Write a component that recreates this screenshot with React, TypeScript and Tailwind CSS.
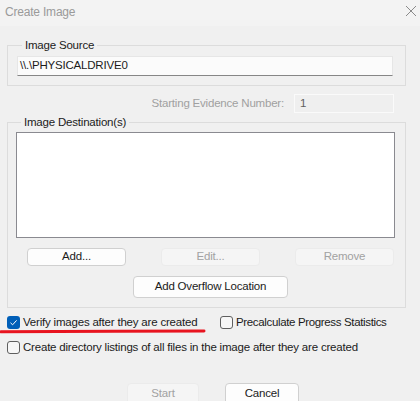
import React from "react";

const font = { fontFamily: '"Liberation Sans", Arial, sans-serif' };

function Btn({ children, disabled, className = "" }: { children: React.ReactNode; disabled?: boolean; className?: string }) {
  return (
    <div
      className={
        "flex items-center justify-center rounded-[4px] border text-[11.5px] tracking-[-0.2px] " +
        (disabled
          ? "border-[#ebebeb] bg-[#f5f5f5] text-[#a2a2a2] "
          : "border-[#d0d0d0] bg-[#fdfdfd] text-[#1b1b1b] ") +
        className
      }
    >
      {children}
    </div>
  );
}

function Check({ checked }: { checked?: boolean }) {
  return checked ? (
    <div className="flex h-[13px] w-[13px] shrink-0 items-center justify-center rounded-[3px] bg-[#005fb8]">
      <svg width="9" height="9" viewBox="0 0 9 9">
        <path d="M1.5 4.8 L3.6 6.8 L7.6 2.4" fill="none" stroke="#ffffff" strokeWidth="1" />
      </svg>
    </div>
  ) : (
    <div className="h-[13px] w-[13px] shrink-0 rounded-[3px] border border-[#5f5f5f] bg-[#f7f7f7]" />
  );
}

export default function App() {
  return (
    <div className="relative h-[401px] w-[420px] overflow-hidden bg-[#f0f0f0] text-[11.5px] tracking-[-0.2px] text-[#1b1b1b]" style={font}>
      {/* title bar */}
      <div className="flex h-[26px] items-start justify-between bg-[#f3f3f3] pl-[5px] pr-[3px] pt-[3px]">
        <span className="text-[12px] text-[#9a9a9a]">Create Image</span>
        <svg width="12" height="12" viewBox="0 0 12 12" className="mt-[2px]">
          <path d="M1 1 L11 11 M11 1 L1 11" stroke="#8a8a8a" strokeWidth="1" />
        </svg>
      </div>

      <div className="flex flex-col pl-[7px] pr-[14px] pt-[12px]">
        {/* Image Source */}
        <fieldset className="border border-[#dcdcdc] pb-[9px] pl-[9px] pr-[12px] pt-[4px]">
          <legend className="ml-[5px] px-[3px] leading-[14px]">Image Source</legend>
          <div className="flex h-[20px] items-center border border-[#e6e6e6] border-b-[#868686] bg-[#fbfbfb] pl-[2px]">
            \\.\PHYSICALDRIVE0
          </div>
        </fieldset>

        {/* Starting Evidence Number */}
        <div className="mt-[8px] flex items-center justify-end gap-[10px] pr-[12px]">
          <span className="text-[#a0a0a0]">Starting Evidence Number:</span>
          <div className="flex h-[19px] w-[100px] items-center border border-[#fafafa] bg-[#efefef] pl-[5px] text-[#5f5f5f]">1</div>
        </div>

        {/* Image Destination(s) */}
        <fieldset className="mt-[2px] border border-[#dcdcdc] pb-[9px] pl-[8px] pr-[10px] pt-[3px]">
          <legend className="ml-[5px] px-[3px] leading-[14px]">Image Destination(s)</legend>
          <div className="h-[106px] border border-[#8a8a90] bg-white" />
          <div className="mt-[10px] flex gap-[35px] pl-[11px]">
            <Btn className="h-[18px] w-[99px]">Add...</Btn>
            <Btn disabled className="h-[18px] w-[99px]">Edit...</Btn>
            <Btn disabled className="h-[18px] w-[99px]">Remove</Btn>
          </div>
          <div className="mt-[10px] flex pl-[117px]">
            <Btn className="h-[22px] w-[155px]">Add Overflow Location</Btn>
          </div>
        </fieldset>

        {/* checkboxes */}
        <div className="mt-[6px] flex items-center">
          <div className="flex w-[213px] items-center gap-[3px]">
            <Check checked />
            <span>Verify images after they are created</span>
          </div>
          <div className="flex items-center gap-[3px]">
            <Check />
            <span className="tracking-[-0.35px]">Precalculate Progress Statistics</span>
          </div>
        </div>
        <div className="mt-[8px] flex items-center gap-[3px]">
          <Check />
          <span>Create directory listings of all files in the image after they are created</span>
        </div>

        {/* bottom buttons */}
        <div className="mt-[26px] flex gap-[26px] pl-[120px]">
          <Btn disabled className="h-[22px] w-[72px]">Start</Btn>
          <Btn className="h-[22px] w-[74px]">Cancel</Btn>
        </div>
      </div>

      {/* red annotation underline */}
      <svg className="absolute left-0 top-[328px]" width="206" height="7" viewBox="0 0 206 7">
        <path d="M1 3.8 C 60 3.4, 140 3.1, 204 3.0" fill="none" stroke="#e8141f" strokeWidth="3" strokeLinecap="round" />
      </svg>
    </div>
  );
}
